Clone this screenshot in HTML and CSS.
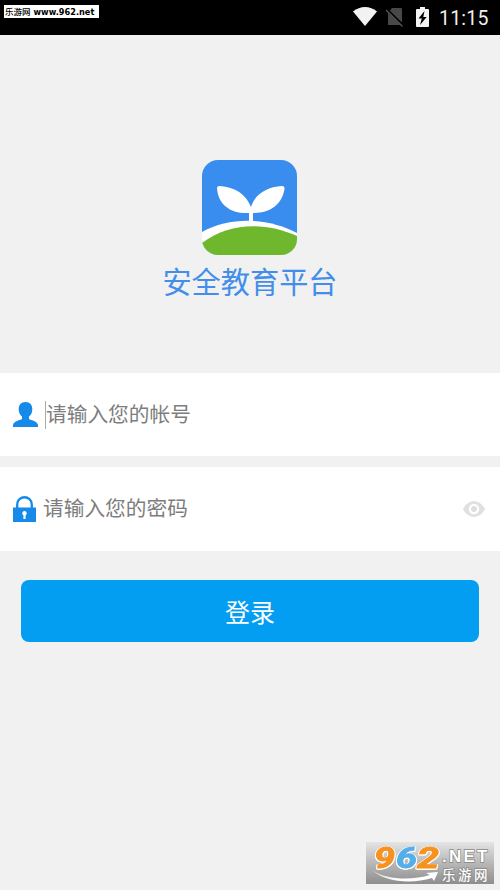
FILE: index.html
```html
<!DOCTYPE html>
<html lang="zh-CN">
<head>
<meta charset="utf-8">
<title>安全教育平台</title>
<link rel="stylesheet" href="styles.css">
</head>
<body>
<div class="screen">
  <header class="status">
    <div class="tag"><span class="tag-cn">乐游网</span><span class="tag-url">www.962.net</span></div>
    <div class="status-icons">
      <svg class="wifi" width="24" height="19" viewBox="0 0 24 19"><path d="M0 4.500C7-1.500 17-1.500 24 4.500L12 19Z" fill="#f2f2f2"/></svg>
      <svg class="nosim" width="18" height="20" viewBox="0 0 18 20"><path d="M6 1h9a1 1 0 0 1 1 1v16H2V6Z" fill="#484848"/><path d="M1 3 17.500 19" stroke="#000" stroke-width="3"/><path d="M0 3 16.500 19.500" stroke="#555" stroke-width="1.400"/></svg>
      <svg class="battery" width="13" height="20" viewBox="0 0 13 20"><path d="M4 0h5v2h3q1 0 1 1v16q0 1-1 1H1q-1 0-1-1V3q0-1 1-1h3Z" fill="#f4f4f4"/><path d="M8.500 4 2.500 11.500h3.300L4 18l6.700-8H7.300Z" fill="#000"/></svg>
      <span class="clock">11:15</span>
    </div>
  </header>
  <main>
    <section class="brand">
      <svg class="logo" width="95" height="95" viewBox="0 0 95 95">
        <defs><clipPath id="tile"><rect width="95" height="95" rx="16"/></clipPath></defs>
        <g clip-path="url(#tile)">
          <rect width="95" height="95" fill="#398dee"/>
          <path d="M0 72C28 57 64 57 95 73V96H0Z" fill="#fff"/>
          <path d="M0 83C28 62 64 62 95 76V96H0Z" fill="#6fb72c"/>
          <path d="M47 65V53C29 54 16 45 15 28Q15 26 18 26C33 27 44 34 49 47C53 34 65 27 80 26Q83 26 82.500 29C80 44 69 53 51 53V65Z" fill="#fff"/>
        </g>
      </svg>
      <h1>安全教育平台</h1>
    </section>
    <div class="field account">
      <svg class="person" width="25" height="25" viewBox="0 0 25 25"><path d="M12.500 0C8 0 5.500 3 5.700 7.500C5.900 11 7 13 9 14.500V17C7 18.500 1 18.500 0 23V25H25V23C24 18.500 18 18.500 16 17V14.500C18 13 19.200 11 19.300 7.500C19.500 3 17 0 12.500 0Z" fill="#158ae8"/></svg>
      <span class="caret"></span><span class="hint">请输入您的帐号</span>
    </div>
    <div class="field password">
      <svg class="lock" width="23" height="26" viewBox="0 0 23 26"><path d="M4.200 13V8.500C4.200-1.200 18.800-1.200 18.800 8.500V13" fill="none" stroke="#158ae8" stroke-width="2.300"/><rect y="11.500" width="23" height="14.500" fill="#158ae8"/><circle cx="11.500" cy="17.300" r="2.200" fill="#fff"/><path d="M10.400 18h2.200v5h-2.200Z" fill="#fff"/></svg>
      <span class="hint">请输入您的密码</span>
      <svg class="eye" width="22" height="16" viewBox="0 0 22 16"><path d="M0 8C5-2.500 17-2.500 22 8C17 18.500 5 18.500 0 8Z" fill="#e0e0e0"/><circle cx="11" cy="8" r="5.200" fill="#fff"/><circle cx="11" cy="8" r="3" fill="#dedede"/></svg>
    </div>
    <div class="login">登录</div>
  </main>
  <div class="watermark">
    <svg class="art" width="76" height="42" viewBox="0 0 76 42">
      <defs><linearGradient id="swoosh"><stop offset="0" stop-color="#fff" stop-opacity=".6"/><stop offset=".4" stop-color="#fff"/></linearGradient></defs>
      <g class="digits">
        <text x="8" y="26" textLength="21" lengthAdjust="spacingAndGlyphs" fill="#f7921e" stroke="#f7921e">9</text>
        <text x="30" y="26" textLength="21" lengthAdjust="spacingAndGlyphs" fill="#55aee8" stroke="#55aee8">6</text>
        <text x="51" y="26" textLength="22" lengthAdjust="spacingAndGlyphs" fill="#f7921e" stroke="#f7921e">2</text>
      </g>
      <path d="M6 28C22 39 48 38 64 33L60 31 72 30 68 39 66 36C47 42 20 41 6 28Z" fill="url(#swoosh)"/>
    </svg>
    <div class="names">
      <div class="net">.NET</div>
      <div class="site">乐游网</div>
    </div>
  </div>
</div>
</body>
</html>
```
FILE: styles.css
```css
body {
  margin: 0;
  background: #f1f1f1;
  font-family: Roboto, "Noto Sans CJK SC", sans-serif;
}
.screen {
  position: relative;
  width: 500px;
  height: 890px;
  overflow: hidden;
}
.status {
  display: flex;
  justify-content: space-between;
  height: 35px;
  background: #000;
}
.tag {
  display: flex;
  align-items: center;
  gap: 3px;
  box-sizing: border-box;
  width: 95px;
  height: 13px;
  margin: 5px 0 0 4px;
  padding-left: 1px;
  background: #fff;
  color: #000;
  white-space: nowrap;
}
.tag-cn {
  font: 500 8.500px/13px "Noto Sans CJK SC", sans-serif;
}
.tag-url {
  padding-top: 2px;
  font: bold 8.200px/11px "DejaVu Sans", sans-serif;
}
.status-icons {
  display: flex;
  align-items: flex-start;
  padding: 7px 11px 0 0;
}
.nosim {
  margin-left: 9px;
}
.battery {
  margin-left: 12px;
}
.clock {
  width: 50px;
  margin: 0 0 0 10px;
  color: #efefef;
  font-size: 19.500px;
  line-height: 24px;
  letter-spacing: 0.200px;
}
.brand {
  display: flex;
  flex-direction: column;
  align-items: center;
  box-sizing: border-box;
  height: 338px;
  padding-top: 125px;
}
.logo {
  margin-right: 1px;
}
h1 {
  margin: 5px 0 0;
  color: #438eea;
  font: 400 29.200px/40px "Noto Sans CJK SC", sans-serif;
}
.field {
  display: flex;
  align-items: center;
  box-sizing: border-box;
  padding: 0 15px 0 13px;
  background: #fff;
}
.account {
  height: 83px;
}
.password {
  height: 84px;
  margin-top: 11px;
}
.caret {
  width: 1px;
  height: 28px;
  margin-left: 7px;
  background: #aaa;
}
.hint {
  margin-bottom: 4px;
  color: #7d7d7d;
  font: 400 20.700px/30px "Noto Sans CJK SC", sans-serif;
}
.password .hint {
  margin-left: 7px;
}
.eye {
  margin-left: auto;
}
.login {
  height: 62px;
  margin: 29px 21px 0;
  border-radius: 8px;
  background: #039df1;
  color: #fff;
  font: 400 25px/62px "Noto Sans CJK SC", sans-serif;
  text-align: center;
}
.watermark {
  position: absolute;
  right: 6px;
  bottom: 6px;
  display: flex;
  width: 128px;
  height: 42px;
  background: linear-gradient(#e4e4e4, #b8b8b8 50%, #8e8e8e);
}
.art {
  flex: none;
  overflow: visible;
}
.digits {
  font: italic bold 29px Roboto, sans-serif;
  stroke-width: 0.900px;
  filter: drop-shadow(1px 0 0 #fff) drop-shadow(-1px 0 0 #fff) drop-shadow(0 1px 0 #fff);
}
.names {
  color: #fff;
  white-space: nowrap;
  -webkit-text-stroke: 1.500px #888;
  paint-order: stroke;
}
.net {
  padding-top: 5px;
  font: bold 17px/19px "Liberation Sans", sans-serif;
  letter-spacing: 2.200px;
}
.site {
  font: 500 13.500px/16px "Noto Sans CJK SC", sans-serif;
  letter-spacing: 2.500px;
}
```
